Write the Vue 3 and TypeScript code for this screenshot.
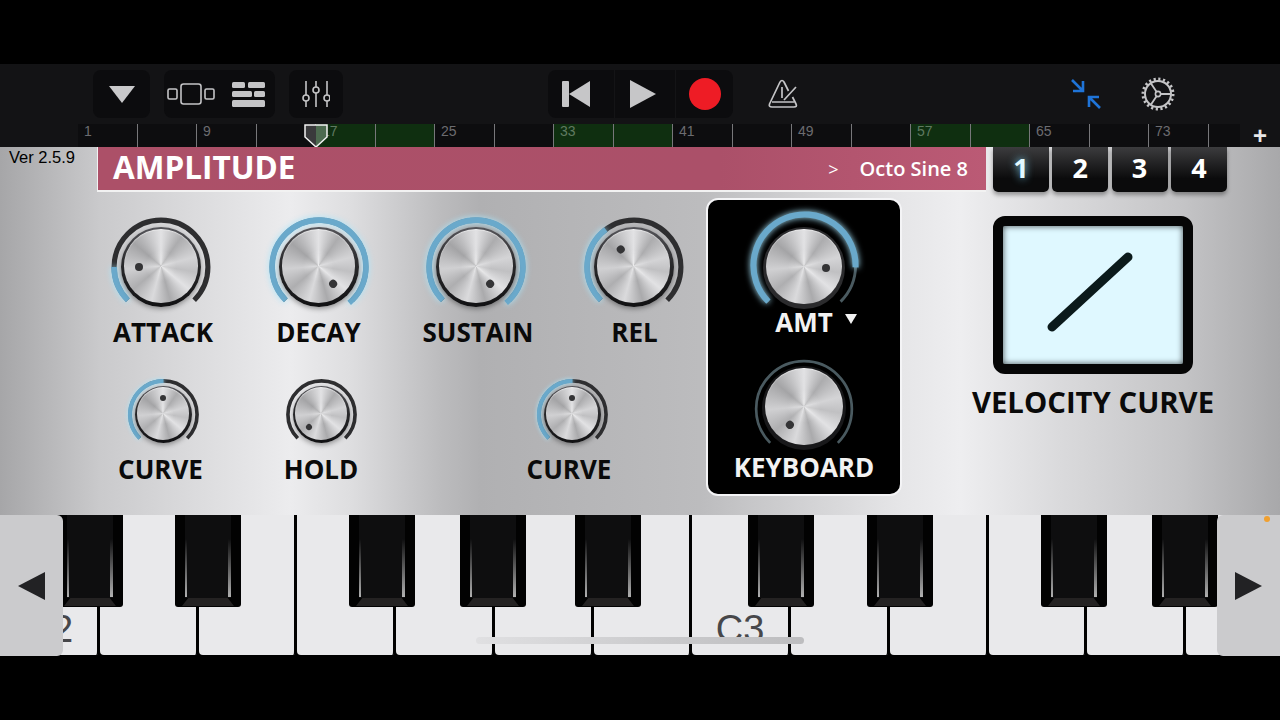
<template>
  <div class="screen">
    <header class="toolbar">
      <button class="tool tool--view">
        <svg width="26" height="17" viewBox="0 0 26 17"><path d="M0 0H26L13 17Z" fill="#c9c9cb" /></svg>
      </button>
      <div class="tool tool--pair">
        <svg width="48" height="22" viewBox="0 0 48 22" fill="none" stroke="#c4c4c6" stroke-width="1.6">
          <rect x="1" y="6" width="9" height="10" rx="1.5" />
          <rect x="14" y="1" width="20" height="20" rx="2.5" />
          <rect x="38" y="6" width="9" height="10" rx="1.5" />
        </svg>
        <svg width="33" height="25" viewBox="0 0 33 25" fill="#c4c4c6">
          <rect x="0" y="0" width="13" height="6" rx="1.5" />
          <rect x="16" y="0" width="17" height="6" rx="1.5" />
          <rect x="0" y="9" width="20" height="6" rx="1.5" />
          <rect x="22" y="9" width="11" height="6" rx="1.5" />
          <rect x="0" y="18" width="33" height="7" rx="1.5" />
        </svg>
      </div>
      <button class="tool tool--mixer">
        <svg width="28" height="28" viewBox="0 0 28 28" fill="#0c0c0e" stroke="#c4c4c6" stroke-width="1.6">
          <path d="M4 1V27M14 1V27M25 1V27" />
          <circle cx="4" cy="18" r="3" />
          <circle cx="14" cy="10" r="3" />
          <circle cx="25" cy="18" r="3" />
        </svg>
      </button>
      <div class="tool transport">
        <span class="transport__cell transport__cell--back">
          <svg width="28" height="26" viewBox="0 0 28 26" fill="#c6c6c8">
            <rect x="0" y="0" width="7" height="26" rx="1" />
            <path d="M7 13L28 0V26Z" />
          </svg>
        </span>
        <span class="transport__cell transport__cell--play">
          <svg width="26" height="28" viewBox="0 0 26 28"><path d="M0 0L26 14L0 28Z" fill="#c6c6c8" /></svg>
        </span>
        <span class="transport__cell">
          <svg width="32" height="32" viewBox="0 0 32 32"><circle cx="16" cy="16" r="16" fill="#ee1c25" /></svg>
        </span>
      </div>
      <svg class="metronome" width="30" height="30" viewBox="0 0 30 30" fill="none" stroke="#c4c4c6" stroke-width="1.7" stroke-linejoin="round">
        <path d="M12 3Q14 0 16 3L20.5 12M12 3L1.5 25Q0.5 28 4 28H26Q29.5 28 28 25L24.5 18" />
        <path d="M4 23H26M14 8V19M16 21L28 8" />
      </svg>
      <svg class="shrink" width="30" height="30" viewBox="0 0 30 30" fill="none" stroke="#1f74d8" stroke-width="2.6">
        <path d="M1 1L12 12M2 12H12V2M29 29L18 18M28 18H18V28" />
      </svg>
      <svg class="gear" width="34" height="34" viewBox="0 0 34 34" fill="none" stroke="#c4c4c6">
        <circle cx="17" cy="17" r="13" stroke-width="2" />
        <circle cx="17" cy="17" r="15" stroke-width="3" stroke-dasharray="2.2 2.5" />
        <circle cx="17" cy="17" r="2.6" stroke-width="1.6" />
        <path d="M19.5 17H30M15.7 15L10 6.5M15.7 19L10 27.5" stroke-width="1.8" />
      </svg>
    </header>

    <div class="ruler">
      <div class="ruler__track">
        <span
          v-for="cell in rulerCells"
          :key="cell.index"
          class="ruler__cell"
          :class="{ 'ruler__cell--on': cell.active }"
        >{{ cell.label }}</span>
        <svg class="playhead" width="24" height="24" viewBox="0 0 24 24">
          <path d="M1 1H12V23L1 13Z" fill="#3a3a3c" />
          <path d="M12 1H23V13L12 23Z" fill="#4d6b50" />
          <path d="M1 1H23V13L12 23L1 13Z" fill="none" stroke="#f2f2f2" stroke-width="1.5" />
        </svg>
      </div>
      <span class="ruler__add">+</span>
    </div>

    <main class="panel">
      <div class="panel__head">
        <span class="version">Ver 2.5.9</span>
        <div class="title-bar">
          <span class="title-bar__name">AMPLITUDE</span>
          <span class="title-bar__arrow">&gt;</span>
          <span class="title-bar__patch">Octo Sine 8</span>
        </div>
        <div class="tabs">
          <span v-for="n in 4" :key="n" class="tab" :class="{ 'tab--on': n === 1 }">{{ n }}</span>
        </div>
      </div>

      <div class="panel__body">
        <div class="knobs">
          <div class="knob-row knob-row--top">
            <div v-for="k in envelope" :key="k.label" class="cell">
              <div class="knob knob--lg">
                <svg class="knob__arc" viewBox="0 0 100 100">
                  <path :d="arc(-135, 135)" class="arc-track" />
                  <path v-if="k.lit" :d="arc(-135, k.angle)" class="arc-lit" />
                </svg>
                <div class="knob__rim"><div class="knob__metal"></div></div>
                <div class="knob__arm" :style="{ transform: `rotate(${k.angle}deg)` }"><i class="knob__dot"></i></div>
              </div>
              <span class="label label--top" :style="{ marginLeft: `${k.shift}px` }">{{ k.label }}</span>
            </div>
          </div>
          <div class="knob-row knob-row--bottom">
            <div v-for="k in curves" :key="k.id" class="cell" :class="{ 'cell--far': k.far }">
              <div class="knob knob--sm">
                <svg class="knob__arc" viewBox="0 0 100 100">
                  <path :d="arc(-135, 135)" class="arc-track" />
                  <path v-if="k.lit" :d="arc(-135, k.angle)" class="arc-lit" />
                </svg>
                <div class="knob__rim"><div class="knob__metal"></div></div>
                <div class="knob__arm" :style="{ transform: `rotate(${k.angle}deg)` }"><i class="knob__dot"></i></div>
              </div>
              <span class="label label--gap" :style="{ marginLeft: `${k.shift}px` }">{{ k.label }}</span>
            </div>
          </div>
        </div>

        <section class="mod">
          <div class="knob knob--amt">
            <svg class="knob__arc" viewBox="0 0 100 100">
              <path :d="arc(-135, 135)" class="arc-track arc-track--thin" />
              <path :d="arc(-135, 92)" class="arc-lit" />
            </svg>
            <div class="knob__rim"><div class="knob__metal"></div></div>
            <div class="knob__arm" :style="{ transform: 'rotate(90deg)' }"><i class="knob__dot"></i></div>
          </div>
          <span class="label label--light label--amt">AMT<i class="amt-caret"></i></span>
          <div class="knob knob--kb">
            <svg class="knob__arc" viewBox="0 0 100 100">
              <path :d="arc(-135, 135)" class="arc-track arc-track--thin" />
            </svg>
            <div class="knob__rim"><div class="knob__metal"></div></div>
            <div class="knob__arm" :style="{ transform: 'rotate(-140deg)' }"><i class="knob__dot"></i></div>
          </div>
          <span class="label label--light label--kb">KEYBOARD</span>
        </section>

        <section class="velocity">
          <div class="velocity__screen">
            <svg width="180" height="138" viewBox="0 0 180 138">
              <path d="M49 101L125 31" stroke="#0b1a1b" stroke-width="9" stroke-linecap="round" />
            </svg>
          </div>
          <span class="velocity__label">VELOCITY CURVE</span>
        </section>
      </div>
    </main>

    <div class="piano">
      <div class="piano__whites">
        <div v-for="w in whiteKeys" :key="w.id" class="white-key">
          <span class="white-key__note">{{ w.note }}</span>
        </div>
      </div>
      <div
        v-for="x in blackKeys"
        :key="x"
        class="black-key"
        :style="{ left: `${x}px` }"
      >
        <i class="black-key__shine black-key__shine--l"></i>
        <i class="black-key__shine black-key__shine--r"></i>
        <i class="black-key__lip"></i>
      </div>
      <div class="nav nav--left"><i class="nav__tri nav__tri--left"></i></div>
      <div class="nav nav--right">
        <i class="nav__tri nav__tri--right"></i>
        <i class="nav__led"></i>
      </div>
      <div class="home-bar"></div>
    </div>
  </div>
</template>

<script setup lang="ts">
// 1280x720 letterboxed synth screen
interface Knob {
  id?: string
  label: string
  angle: number
  lit: boolean
  shift: number
  far?: boolean
}

const RADIUS = 46

const polar = (deg: number) => {
  const rad = (deg * Math.PI) / 180
  return {
    x: 50 + RADIUS * Math.sin(rad),
    y: 50 - RADIUS * Math.cos(rad),
  }
}

const arc = (from: number, to: number): string => {
  const a = polar(from)
  const b = polar(to)
  const large = to - from > 180 ? 1 : 0
  return `M${a.x.toFixed(2)} ${a.y.toFixed(2)}A${RADIUS} ${RADIUS} 0 ${large} 1 ${b.x.toFixed(2)} ${b.y.toFixed(2)}`
}

const envelope: Knob[] = [
  { label: 'ATTACK', angle: -90, lit: true, shift: 4 },
  { label: 'DECAY', angle: 140, lit: true, shift: 0 },
  { label: 'SUSTAIN', angle: 140, lit: true, shift: 4 },
  { label: 'REL', angle: -37, lit: true, shift: 2 },
]

const curves: Knob[] = [
  { id: 'c1', label: 'CURVE', angle: 0, lit: true, shift: -5 },
  { id: 'hold', label: 'HOLD', angle: -135, lit: false, shift: 0 },
  { id: 'c2', label: 'CURVE', angle: 0, lit: true, shift: -6, far: true },
]

const greenCells = [4, 5, 8, 9, 14, 15]
const rulerCells = Array.from({ length: 20 }, (_, index) => ({
  index,
  label: index % 2 === 0 ? String(index * 4 + 1) : '',
  active: greenCells.includes(index),
}))

const whiteKeys = Array.from({ length: 13 }, (_, i) => ({
  id: i,
  note: i === 0 ? 'C2' : i === 7 ? 'C3' : '',
}))

const blackKeys = [57, 175, 349, 460, 575, 748, 867, 1041, 1152]
</script>

<style>
html, body {
  background: #000;
}
</style>

<style scoped>
.screen {
  width: 1280px;
  height: 720px;
  padding-top: 64px;
  box-sizing: border-box;
  background: #000;
  overflow: hidden;
  font-family: "Open Sans", "Noto Sans", sans-serif;
}

/* toolbar */
.toolbar {
  height: 60px;
  display: flex;
  align-items: center;
  padding-left: 93px;
  box-sizing: border-box;
  background: #131315;
}
.tool {
  height: 48px;
  display: flex;
  align-items: center;
  justify-content: center;
  padding: 0;
  border: 0;
  border-radius: 8px;
  background: #0c0c0e;
}
.tool--view { width: 57px; }
.tool--pair {
  width: 111px;
  margin-left: 14px;
  gap: 17px;
  padding-left: 3px;
  box-sizing: border-box;
  justify-content: flex-start;
}
.tool--mixer { width: 54px; margin-left: 14px; }
.transport {
  width: 185px;
  margin-left: 205px;
}
.transport__cell {
  flex: 1;
  height: 100%;
  box-sizing: border-box;
  display: flex;
  align-items: center;
  justify-content: center;
  border-left: 1px solid #141416;
}
.transport__cell:first-child { border-left: 0; }
.transport__cell--back { padding-right: 9px; }
.transport__cell--play { padding-right: 4px; }
.metronome { margin-left: 35px; }
.shrink { margin-left: 273px; }
.gear { margin-left: 40px; }

/* ruler */
.ruler {
  height: 23px;
  display: flex;
  padding-left: 78px;
  background: #131315;
}
.ruler__track {
  position: relative;
  flex: none;
  width: 1162px;
  display: flex;
  overflow: hidden;
  background: #0d0d0f;
}
.ruler__cell {
  flex: none;
  width: 59.5px;
  box-sizing: border-box;
  padding: 0 0 0 6px;
  border-right: 1px solid #77777a;
  font-family: "Liberation Sans", sans-serif;
  font-size: 14px;
  line-height: 15px;
  color: #6c6c70;
}
.ruler__cell--on {
  background: #0f2f10;
  color: #5f7a60;
}
.playhead {
  position: absolute;
  left: 226px;
  top: 0;
  z-index: 2;
}
.ruler__add {
  flex: 1;
  text-align: center;
  font-family: "Liberation Sans", sans-serif;
  font-size: 24px;
  font-weight: 700;
  line-height: 24px;
  color: #e8e8e8;
}

/* panel */
.panel {
  height: 368px;
  background: linear-gradient(
    90deg,
    #a6a6a8 0,
    #cacacc 100px,
    #dcdcde 200px,
    #ececee 290px,
    #dedee0 350px,
    #bcbcbe 440px,
    #b0b0b2 480px,
    #bcbcbe 700px,
    #e6e6e8 902px,
    #eeeef0 960px,
    #dadadc 1060px,
    #c4c4c6 1183px,
    #a8a8aa 1280px
  );
}
.panel__head {
  height: 45px;
  display: flex;
}
.version {
  flex: none;
  width: 97px;
  padding: 1px 0 0 9px;
  box-sizing: border-box;
  font-family: "Liberation Sans", sans-serif;
  font-size: 16.5px;
  line-height: 18px;
  color: #000;
}
.title-bar {
  flex: none;
  width: 889px;
  height: 45px;
  display: flex;
  align-items: center;
  padding: 0 18px 0 15px;
  box-sizing: border-box;
  border-left: 1px solid #f2f2f2;
  border-bottom: 2px solid #f2f2f2;
  background: linear-gradient(90deg, #ac5068, #ab5069 70%, #bb5a75);
  color: #fff;
}
.title-bar__name {
  font-size: 31.5px;
  font-weight: 700;
  line-height: 40px;
  margin-top: -4px;
}
.title-bar__arrow {
  margin-left: auto;
  font-size: 18px;
}
.title-bar__patch {
  margin-left: 21px;
  font-size: 20px;
  font-weight: 600;
}
.tabs {
  display: flex;
  gap: 3.3px;
  margin-left: 7px;
}
.tab {
  width: 56px;
  height: 45px;
  padding-bottom: 4px;
  box-sizing: border-box;
  display: flex;
  align-items: center;
  justify-content: center;
  border-radius: 0 0 5px 5px;
  background: linear-gradient(180deg, #3c3c3e, #0b0b0c 70%);
  box-shadow: 0 3px 4px rgba(0, 0, 0, 0.35);
  font-size: 27px;
  font-weight: 700;
  color: #fff;
}
.tab--on {
  color: #e2f9ff;
  text-shadow: 0 0 8px #7fd4f0;
}

.panel__body {
  display: flex;
}
.knobs {
  flex: none;
  width: 706px;
  padding: 24px 0 0 91px;
  box-sizing: border-box;
}
.knob-row {
  display: flex;
}
.knob-row--top {
  gap: 17.5px;
}
.knob-row--bottom {
  gap: 18px;
  margin-top: 31px;
  margin-left: 2px;
}
.cell {
  flex: none;
  width: 140px;
  display: flex;
  flex-direction: column;
  align-items: center;
}
.cell--far {
  margin-left: 93px;
}

/* knob */
.knob {
  position: relative;
  display: flex;
  align-items: center;
  justify-content: center;
}
.knob--lg { width: 102px; height: 102px; }
.knob--sm { width: 73px; height: 73px; }
.knob--amt { width: 111px; height: 96px; }
.knob--kb { width: 104px; height: 104px; }
.knob__arc {
  position: absolute;
  left: 0;
  top: 0;
  width: 100%;
  overflow: visible;
}
.arc-track {
  fill: none;
  stroke: #2e2e30;
  stroke-width: 5;
}
.arc-track--thin {
  stroke: #4a5a60;
  stroke-width: 2.6;
}
.arc-lit {
  fill: none;
  stroke: #6aa9cb;
  stroke-width: 5.5;
  filter: drop-shadow(0 0 3px #a8e4fa);
}
.knob__rim {
  position: relative;
  border-radius: 50%;
  background: linear-gradient(180deg, #55555a, #2a2a2c 45%, #111113);
  box-shadow: 0 2px 5px rgba(0, 0, 0, 0.35);
  display: flex;
  align-items: center;
  justify-content: center;
}
.knob--lg .knob__rim { width: 80px; height: 80px; }
.knob--sm .knob__rim { width: 57px; height: 57px; }
.knob--amt .knob__rim { width: 82px; height: 82px; margin-top: 20px; background: #2b2b2d; }
.knob--kb .knob__rim { width: 84px; height: 84px; margin-top: -2px; background: #18181a; }
.knob__metal {
  width: 92%;
  height: 92%;
  margin-top: -3%;
  border-radius: 50%;
  background:
    radial-gradient(circle, rgba(255, 255, 255, 0.35) 0, rgba(255, 255, 255, 0) 30%, rgba(90, 90, 92, 0) 75%, rgba(90, 90, 92, 0.25) 100%),
    conic-gradient(
      #e2e2e4 0deg,
      #acacae 35deg,
      #d4d4d6 75deg,
      #c0c0c2 100deg,
      #e2e2e4 130deg,
      #aaaaac 165deg,
      #dadadc 195deg,
      #aeaeb0 230deg,
      #d0d0d2 265deg,
      #a4a4a6 310deg,
      #e2e2e4 360deg
    );
  box-shadow: inset 0 1px 1px rgba(255, 255, 255, 0.5);
}
.knob__arm {
  position: absolute;
  left: 50%;
  top: 50%;
  width: 0;
  height: 0;
}
.knob--amt .knob__arm { margin-top: 10px; }
.knob--kb .knob__arm { margin-top: -1px; }
.knob__dot {
  position: absolute;
  left: -4px;
  top: -26px;
  width: 8px;
  height: 8px;
  border-radius: 50%;
  background: #343436;
}
.knob--sm .knob__dot {
  left: -3px;
  top: -20px;
  width: 6px;
  height: 6px;
}
.label {
  font-size: 26px;
  font-weight: 700;
  line-height: 30px;
  white-space: nowrap;
  color: #0a0a0a;
}
.label--top { margin-top: -1px; }
.label--gap { margin-top: 3px; }

/* amt / keyboard block */
.mod {
  flex: none;
  width: 196px;
  height: 298px;
  margin-top: 6px;
  padding-top: 10px;
  box-sizing: border-box;
  display: flex;
  flex-direction: column;
  align-items: center;
  border: 2px solid #f4f4f6;
  border-radius: 12px;
  background: #000;
}
.label--light { color: #f2f2f2; }
.label--amt {
  position: relative;
  margin-top: 1px;
}
.amt-caret {
  position: absolute;
  left: 70px;
  top: 7px;
  width: 0;
  height: 0;
  border-left: 6px solid transparent;
  border-right: 6px solid transparent;
  border-top: 10px solid #f2f2f2;
}
.knob--kb { margin-top: 20px; }
.label--kb { margin-top: -9px; }

/* velocity */
.velocity {
  flex: none;
  width: 260px;
  margin-left: 61px;
  padding-top: 24px;
  display: flex;
  flex-direction: column;
  align-items: center;
}
.velocity__screen {
  width: 200px;
  height: 158px;
  box-sizing: border-box;
  border: 10px solid #060606;
  border-radius: 12px;
  background: #dff8ff;
  box-shadow: inset 0 0 6px rgba(0, 0, 0, 0.7);
}
.velocity__screen svg { display: block; }
.velocity__label {
  margin-top: 8px;
  font-size: 29.3px;
  font-weight: 700;
  line-height: 40px;
  white-space: nowrap;
  color: #0a0a0a;
}

/* keyboard */
.piano {
  position: relative;
  height: 141px;
  overflow: hidden;
  background: #000;
}
.piano__whites {
  display: flex;
  height: 140px;
  margin-left: 1px;
}
.white-key {
  flex: none;
  width: 98.75px;
  box-sizing: border-box;
  height: 100%;
  position: relative;
  border-right: 3px solid #000;
  border-radius: 0 0 4px 4px;
  background: #e9e9eb;
  text-align: center;
}
.white-key__note {
  position: absolute;
  left: 0;
  right: 0;
  top: 95px;
  font-family: "Liberation Sans", sans-serif;
  font-size: 38px;
  line-height: 38px;
  color: #47474a;
}
.black-key {
  position: absolute;
  top: 0;
  width: 66px;
  height: 92px;
  border-radius: 0 0 3px 3px;
  background: #020202;
}
.black-key::before {
  content: '';
  position: absolute;
  left: 10px;
  right: 10px;
  top: 0;
  bottom: 9px;
  background: #0e0e0f;
}
.black-key__shine {
  position: absolute;
  top: 24px;
  bottom: 10px;
  width: 2px;
  background: linear-gradient(180deg, rgba(200, 200, 200, 0), #b0b0b0);
}
.black-key__shine--l { left: 10px; }
.black-key__shine--r { right: 10px; width: 3px; }
.black-key__lip {
  position: absolute;
  left: 7px;
  right: 7px;
  bottom: 1px;
  height: 8px;
  background: #242222;
  clip-path: polygon(12% 0, 88% 0, 100% 100%, 0 100%);
}
.nav {
  position: absolute;
  top: 0;
  width: 63px;
  height: 141px;
  background: #cbcbcd;
}
.nav--left {
  left: 0;
  border-radius: 0 6px 6px 0;
}
.nav--right {
  right: 0;
  border-radius: 6px 0 0 6px;
}
.nav__tri {
  position: absolute;
  top: 57px;
  width: 0;
  height: 0;
  border-top: 14px solid transparent;
  border-bottom: 14px solid transparent;
}
.nav__tri--left {
  left: 18px;
  border-right: 27px solid #222224;
}
.nav__tri--right {
  left: 18px;
  border-left: 27px solid #222224;
}
.nav__led {
  position: absolute;
  left: 47px;
  top: 1px;
  width: 6px;
  height: 6px;
  border-radius: 50%;
  background: #f0a030;
}
.home-bar {
  position: absolute;
  left: 476px;
  top: 122px;
  width: 328px;
  height: 7px;
  border-radius: 4px;
  background: linear-gradient(90deg, #e0e0e2, #c9c9cb 60%, #bdbdbf);
}
</style>
